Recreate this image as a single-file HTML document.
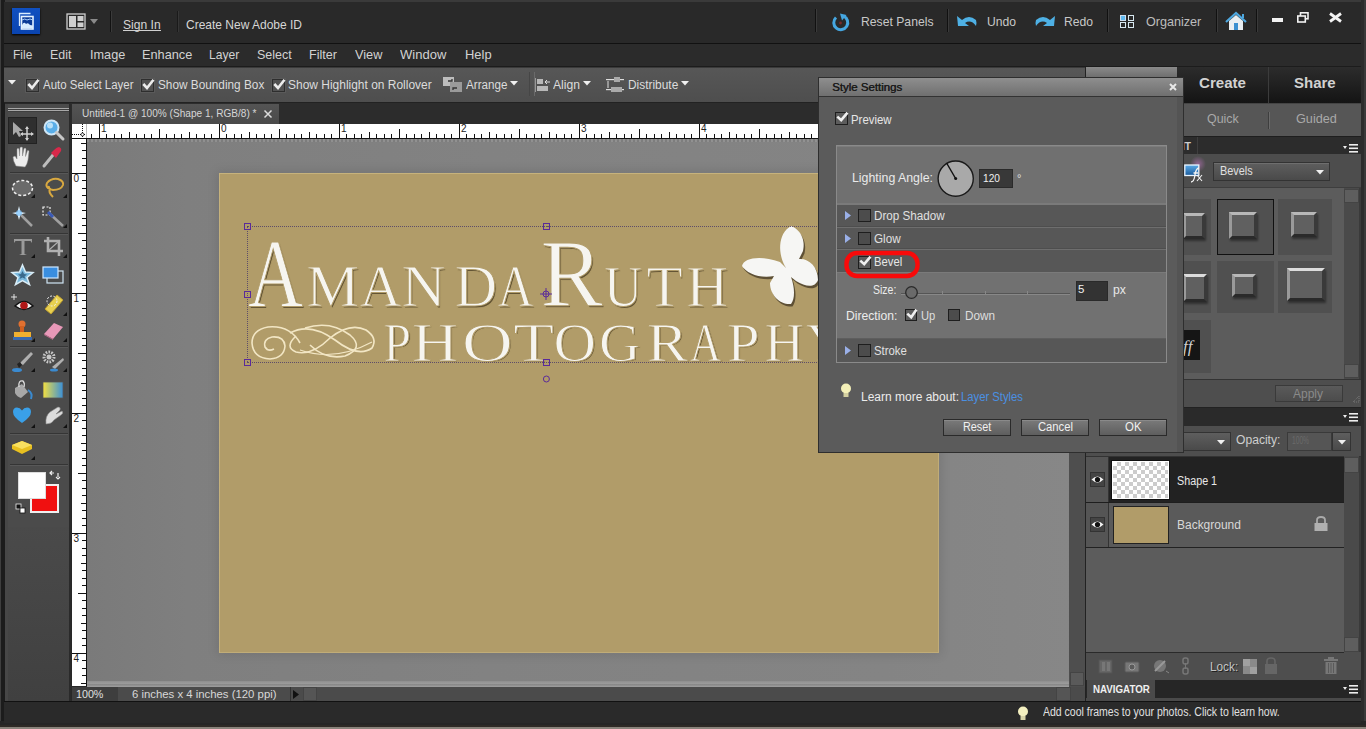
<!DOCTYPE html>
<html><head><meta charset="utf-8">
<style>
*{margin:0;padding:0;box-sizing:border-box}
html,body{width:1366px;height:729px;overflow:hidden;background:#2a2a2a;font-family:"Liberation Sans",sans-serif;}
.a{position:absolute}
.t{position:absolute;white-space:nowrap;line-height:normal}
svg{position:absolute;overflow:visible}
</style></head><body>
<div class="a" style="left:0;top:0;width:1366px;height:729px;background:#282828;overflow:hidden">
<div class="a" style="left:0px;top:0px;width:1366px;height:729px;background:#282828"></div>
<div class="a" style="left:0px;top:0px;width:1366px;height:2px;background:#3a3a3a"></div>
<div class="a" style="left:0px;top:0px;width:5px;height:729px;background:#1c1c1c"></div>
<div class="a" style="left:0px;top:0px;width:1px;height:729px;background:#3e3e3e"></div>
<div class="a" style="left:1361px;top:0px;width:5px;height:729px;background:#2c2c2c"></div>
<div class="a" style="left:1364px;top:0px;width:2px;height:729px;background:#3a3a3a"></div>
<div class="a" style="left:0px;top:721px;width:1366px;height:6px;background:#262626"></div>
<div class="a" style="left:0px;top:725px;width:1366px;height:2px;background:#2e2a26"></div>
<div class="a" style="left:0px;top:727px;width:1366px;height:2px;background:#8a847c"></div>
<div class="a" style="left:4px;top:2px;width:1357px;height:41px;background:#292929"></div>
<div class="a" style="left:4px;top:43px;width:1357px;height:1px;background:#111"></div>
<div class="a" style="left:12px;top:8px;width:28px;height:26px;background:linear-gradient(#1050c0,#0a44b0);box-shadow:0 1px 2px #000"></div>
<svg style="left:12px;top:8px;" width="28" height="26" viewBox="0 0 28 26"><path d="M7.5 18 L7.5 5.5 L18.5 5.5" fill="none" stroke="#d8ecff" stroke-width="1.3"/><rect x="9.5" y="8.5" width="11.5" height="12.5" fill="#0a3a96" stroke="#e4f2ff" stroke-width="1.6"/><path d="M10 20.5 L10 17 Q12 13 14 16 Q16 14 18 17 L21 17.5 L21 20.5 Z" fill="#d8ecff"/><path d="M10 12 Q13 10 15 12 Q18 10 21 12" fill="none" stroke="#a8d0ff" stroke-width="1"/></svg>
<svg style="left:66px;top:13px;" width="22" height="17" viewBox="0 0 22 17"><rect x="1" y="1" width="18" height="15" fill="none" stroke="#cfcfcf" stroke-width="1.3"/><rect x="3" y="3" width="7" height="11" fill="#cfcfcf"/><rect x="11.5" y="3" width="6" height="5" fill="#cfcfcf"/><rect x="11.5" y="9.5" width="6" height="4.5" fill="#cfcfcf"/></svg>
<svg style="left:90px;top:19px;" width="8" height="5" viewBox="0 0 8 5"><path d="M0 0 L8 0 L4 5 Z" fill="#8a8a8a"/></svg>
<div class="a" style="left:110px;top:11px;width:1px;height:21px;background:#121212"></div>
<div class="a" style="left:111px;top:11px;width:1px;height:21px;background:#3a3a3a"></div>
<div class="t" style="left:123.30px;top:16.54px;font-size:13px;font-weight:400;color:#d6d6d6;font-family:'Liberation Sans';transform:scaleX(0.9288);transform-origin:0 0;">Sign In</div>
<div class="a" style="left:123px;top:30px;width:38px;height:1px;background:#d0d0d0"></div>
<div class="a" style="left:177px;top:11px;width:1px;height:21px;background:#1a1a1a"></div>
<div class="a" style="left:178px;top:11px;width:1px;height:21px;background:#363636"></div>
<div class="t" style="left:186.20px;top:16.54px;font-size:13px;font-weight:400;color:#d6d6d6;font-family:'Liberation Sans';transform:scaleX(0.9226);transform-origin:0 0;">Create New Adobe ID</div>
<div class="a" style="left:815px;top:9px;width:1px;height:23px;background:#111"></div>
<div class="a" style="left:816px;top:9px;width:1px;height:23px;background:#3a3a3a"></div>
<div class="a" style="left:947px;top:9px;width:1px;height:23px;background:#111"></div>
<div class="a" style="left:948px;top:9px;width:1px;height:23px;background:#3a3a3a"></div>
<div class="a" style="left:1107px;top:9px;width:1px;height:23px;background:#111"></div>
<div class="a" style="left:1108px;top:9px;width:1px;height:23px;background:#3a3a3a"></div>
<div class="a" style="left:1216px;top:9px;width:1px;height:23px;background:#111"></div>
<div class="a" style="left:1217px;top:9px;width:1px;height:23px;background:#3a3a3a"></div>
<div class="a" style="left:1256px;top:9px;width:1px;height:23px;background:#111"></div>
<div class="a" style="left:1257px;top:9px;width:1px;height:23px;background:#3a3a3a"></div>
<svg style="left:831px;top:13px;" width="19" height="19" viewBox="0 0 19 19"><path d="M12.5 3.2 A7 7 0 1 1 5 4.5" fill="none" stroke="#45a6e0" stroke-width="3"/><path d="M9 0.5 L15.5 2 L11 7.5 Z" fill="#45a6e0"/><circle cx="9.5" cy="10" r="1.4" fill="#7a2a2a"/></svg>
<div class="t" style="left:860.50px;top:14.43px;font-size:13px;font-weight:400;color:#c8c8c8;font-family:'Liberation Sans';transform:scaleX(0.9376);transform-origin:0 0;">Reset Panels</div>
<svg style="left:956px;top:14px;" width="22" height="14" viewBox="0 0 22 14"><path d="M2 12 L1 2 L6 6 Q13 0 20 6 Q21 9 20 12 Q15 5 9 9 L13 12 Z" fill="#4eb0e4"/></svg>
<div class="t" style="left:986.80px;top:14.34px;font-size:13px;font-weight:400;color:#c8c8c8;font-family:'Liberation Sans';transform:scaleX(0.9331);transform-origin:0 0;">Undo</div>
<svg style="left:1034px;top:14px;" width="22" height="14" viewBox="0 0 22 14"><path d="M20 12 L21 2 L16 6 Q9 0 2 6 Q1 9 2 12 Q7 5 13 9 L9 12 Z" fill="#4eb0e4"/></svg>
<div class="t" style="left:1063.80px;top:14.34px;font-size:13px;font-weight:400;color:#c8c8c8;font-family:'Liberation Sans';transform:scaleX(0.9331);transform-origin:0 0;">Redo</div>
<svg style="left:1120px;top:15px;" width="15" height="13" viewBox="0 0 15 13"><rect x="0.5" y="0.5" width="5" height="5" fill="#5fb8ee" stroke="#cde" stroke-width="1"/><rect x="8.5" y="0.5" width="5" height="5" fill="none" stroke="#d8e8f0" stroke-width="1"/><rect x="0.5" y="7.5" width="5" height="5" fill="none" stroke="#d8e8f0" stroke-width="1"/><rect x="8.5" y="7.5" width="5" height="5" fill="none" stroke="#d8e8f0" stroke-width="1"/></svg>
<div class="t" style="left:1146.00px;top:13.73px;font-size:13px;font-weight:400;color:#bdbdbd;font-family:'Liberation Sans';transform:scaleX(0.9688);transform-origin:0 0;">Organizer</div>
<svg style="left:1225px;top:12px;" width="22" height="19" viewBox="0 0 22 19"><path d="M1 10 L11 1 L21 10" fill="none" stroke="#4ea8e0" stroke-width="2.2"/><path d="M4 9 L11 3 L18 9 L18 18 L4 18 Z" fill="#e8eef2"/><rect x="9" y="11" width="4" height="7" fill="#3a8fd0"/><rect x="17" y="2" width="2" height="4" fill="#4ea8e0"/></svg>
<div class="a" style="left:1272px;top:18px;width:11px;height:4px;background:#f2f2f2"></div>
<svg style="left:1297px;top:12px;" width="12" height="11" viewBox="0 0 12 11"><rect x="3.5" y="0.8" width="7.5" height="6" fill="none" stroke="#f2f2f2" stroke-width="1.6"/><rect x="0.8" y="4" width="7.5" height="6" fill="#292929" stroke="#f2f2f2" stroke-width="1.6"/></svg>
<svg style="left:1329px;top:13px;" width="13" height="9" viewBox="0 0 13 9"><path d="M1 0.5 L12 8.5 M12 0.5 L1 8.5" stroke="#f4f4f4" stroke-width="2.8"/></svg>
<div class="a" style="left:4px;top:44px;width:1357px;height:23px;background:#2b2b2b"></div>
<div class="t" style="left:13.20px;top:47.13px;font-size:13px;font-weight:400;color:#d2d2d2;font-family:'Liberation Sans';transform:scaleX(0.9211);transform-origin:0 0;">File</div>
<div class="t" style="left:50.40px;top:47.13px;font-size:13px;font-weight:400;color:#d2d2d2;font-family:'Liberation Sans';transform:scaleX(0.9551);transform-origin:0 0;">Edit</div>
<div class="t" style="left:89.60px;top:47.13px;font-size:13px;font-weight:400;color:#d2d2d2;font-family:'Liberation Sans';transform:scaleX(0.9767);transform-origin:0 0;">Image</div>
<div class="t" style="left:142.30px;top:47.13px;font-size:13px;font-weight:400;color:#d2d2d2;font-family:'Liberation Sans';transform:scaleX(0.9800);transform-origin:0 0;">Enhance</div>
<div class="t" style="left:209.00px;top:47.13px;font-size:13px;font-weight:400;color:#d2d2d2;font-family:'Liberation Sans';transform:scaleX(0.9314);transform-origin:0 0;">Layer</div>
<div class="t" style="left:256.80px;top:47.13px;font-size:13px;font-weight:400;color:#d2d2d2;font-family:'Liberation Sans';transform:scaleX(0.9629);transform-origin:0 0;">Select</div>
<div class="t" style="left:309.30px;top:47.13px;font-size:13px;font-weight:400;color:#d2d2d2;font-family:'Liberation Sans';transform:scaleX(0.9692);transform-origin:0 0;">Filter</div>
<div class="t" style="left:355.00px;top:47.13px;font-size:13px;font-weight:400;color:#d2d2d2;font-family:'Liberation Sans';transform:scaleX(0.9802);transform-origin:0 0;">View</div>
<div class="t" style="left:400.10px;top:47.13px;font-size:13px;font-weight:400;color:#d2d2d2;font-family:'Liberation Sans';transform:scaleX(1.0011);transform-origin:0 0;">Window</div>
<div class="t" style="left:465.40px;top:47.13px;font-size:13px;font-weight:400;color:#d2d2d2;font-family:'Liberation Sans';transform:scaleX(0.9944);transform-origin:0 0;">Help</div>
<div class="a" style="left:4px;top:66px;width:1357px;height:1px;background:#1c1c1c"></div>
<div class="a" style="left:4px;top:67px;width:1082px;height:35px;background:linear-gradient(#575757,#4e4e4e)"></div>
<div class="a" style="left:4px;top:67px;width:1082px;height:1px;background:#3a3a3a"></div>
<svg style="left:8px;top:80px;" width="8" height="5" viewBox="0 0 8 5"><path d="M0 0 L8 0 L4 4.5 Z" fill="#f0f0f0"/></svg>
<div class="a" style="left:26px;top:79px;width:13px;height:13px;background:#525252;border:1px solid #2e2e2e;box-shadow:0 0 0 1px #5a5a5a"></div>
<svg style="left:26px;top:79px;" width="13" height="13" viewBox="0 0 13 13"><path d="M2.3 5 L6 9 L12.5 0.8" fill="none" stroke="#ececec" stroke-width="2.6"/></svg>
<div class="t" style="left:42.50px;top:78.44px;font-size:12px;font-weight:400;color:#dcdcdc;font-family:'Liberation Sans';transform:scaleX(0.9553);transform-origin:0 0;">Auto Select Layer</div>
<div class="a" style="left:141px;top:79px;width:13px;height:13px;background:#525252;border:1px solid #2e2e2e;box-shadow:0 0 0 1px #5a5a5a"></div>
<svg style="left:141px;top:79px;" width="13" height="13" viewBox="0 0 13 13"><path d="M2.3 5 L6 9 L12.5 0.8" fill="none" stroke="#ececec" stroke-width="2.6"/></svg>
<div class="t" style="left:157.60px;top:78.44px;font-size:12px;font-weight:400;color:#dcdcdc;font-family:'Liberation Sans';transform:scaleX(0.9835);transform-origin:0 0;">Show Bounding Box</div>
<div class="a" style="left:272px;top:79px;width:13px;height:13px;background:#525252;border:1px solid #2e2e2e;box-shadow:0 0 0 1px #5a5a5a"></div>
<svg style="left:272px;top:79px;" width="13" height="13" viewBox="0 0 13 13"><path d="M2.3 5 L6 9 L12.5 0.8" fill="none" stroke="#ececec" stroke-width="2.6"/></svg>
<div class="t" style="left:288.30px;top:78.44px;font-size:12px;font-weight:400;color:#dcdcdc;font-family:'Liberation Sans';transform:scaleX(0.9974);transform-origin:0 0;">Show Highlight on Rollover</div>
<svg style="left:443px;top:77px;" width="20" height="15" viewBox="0 0 20 15"><rect x="0" y="0" width="11" height="9" fill="#bdbdbd"/><rect x="7" y="5" width="12" height="10" fill="#9a9a9a"/><path d="M5 4 L9 4 L9 2 M14 11 L10 11 L10 13" stroke="#333" stroke-width="1.3" fill="none"/></svg>
<div class="t" style="left:465.60px;top:78.14px;font-size:12px;font-weight:400;color:#dcdcdc;font-family:'Liberation Sans';transform:scaleX(0.9695);transform-origin:0 0;">Arrange</div>
<svg style="left:510px;top:81px;" width="8" height="5" viewBox="0 0 8 5"><path d="M0 0 L8 0 L4 4.5 Z" fill="#f0f0f0"/></svg>
<div class="a" style="left:529px;top:72px;width:1px;height:24px;background:#464646"></div>
<div class="a" style="left:534px;top:72px;width:1px;height:24px;background:#6a6a6a"></div>
<svg style="left:535px;top:78px;" width="16" height="14" viewBox="0 0 16 14"><rect x="0" y="0" width="1" height="14" fill="#9a9a9a"/><rect x="2" y="1" width="6" height="5" fill="#b8b8b8"/><rect x="2" y="8" width="11" height="5" fill="#b8b8b8"/><path d="M15 4 L10 4 M12 2 L10 4 L12 6" stroke="#ddd" stroke-width="1" fill="none"/></svg>
<div class="t" style="left:553.30px;top:78.14px;font-size:12px;font-weight:400;color:#dcdcdc;font-family:'Liberation Sans';transform:scaleX(1.0117);transform-origin:0 0;">Align</div>
<svg style="left:583px;top:81px;" width="8" height="5" viewBox="0 0 8 5"><path d="M0 0 L8 0 L4 4.5 Z" fill="#f0f0f0"/></svg>
<svg style="left:605px;top:77px;" width="19" height="15" viewBox="0 0 19 15"><rect x="1" y="2" width="18" height="1.2" fill="#ddd"/><rect x="1" y="12" width="18" height="1.2" fill="#ddd"/><rect x="9" y="0" width="6" height="5" fill="#aaa"/><rect x="6" y="10" width="11" height="5" fill="#aaa"/><path d="M3 4 L3 11" stroke="#ddd" stroke-width="1"/></svg>
<div class="t" style="left:627.50px;top:78.14px;font-size:12px;font-weight:400;color:#dcdcdc;font-family:'Liberation Sans';transform:scaleX(0.9924);transform-origin:0 0;">Distribute</div>
<svg style="left:681px;top:81px;" width="8" height="5" viewBox="0 0 8 5"><path d="M0 0 L8 0 L4 4.5 Z" fill="#f0f0f0"/></svg>
<div class="a" style="left:4px;top:102px;width:1082px;height:1px;background:#222"></div>
<div class="a" style="left:5px;top:104px;width:3px;height:597px;background:#474747"></div>
<div class="a" style="left:8px;top:104px;width:62px;height:424px;background:#4b4b4b"></div>
<div class="a" style="left:8px;top:527px;width:62px;height:174px;background:linear-gradient(#4a4a4a,#404040)"></div>
<div class="a" style="left:69px;top:103px;width:2px;height:598px;background:#2a2a2a"></div>
<div class="a" style="left:8px;top:108px;width:61px;height:1px;background:#a8a8a8"></div>
<div class="a" style="left:8px;top:109px;width:61px;height:1px;background:#3e3e3e"></div>
<div class="a" style="left:8px;top:110px;width:61px;height:1px;background:#a8a8a8"></div>
<div class="a" style="left:8px;top:111px;width:61px;height:1px;background:#3e3e3e"></div>
<div class="a" style="left:10px;top:172px;width:58px;height:1px;background:#353535"></div>
<div class="a" style="left:10px;top:173px;width:58px;height:1px;background:#585858"></div>
<div class="a" style="left:10px;top:233px;width:58px;height:1px;background:#353535"></div>
<div class="a" style="left:10px;top:234px;width:58px;height:1px;background:#585858"></div>
<div class="a" style="left:10px;top:346px;width:58px;height:1px;background:#353535"></div>
<div class="a" style="left:10px;top:347px;width:58px;height:1px;background:#585858"></div>
<div class="a" style="left:10px;top:433px;width:58px;height:1px;background:#353535"></div>
<div class="a" style="left:10px;top:434px;width:58px;height:1px;background:#585858"></div>
<div class="a" style="left:10px;top:464px;width:58px;height:1px;background:#353535"></div>
<div class="a" style="left:10px;top:465px;width:58px;height:1px;background:#585858"></div>
<div class="a" style="left:8px;top:117px;width:29px;height:27px;background:#2f2f2f;border:1px solid #222"></div>
<svg style="left:12px;top:121px;" width="22" height="20" viewBox="0 0 22 20"><path d="M1 1 L1 14 L4 11 L7 16 L9 15 L7 10 L11 10 Z" fill="#a8a8a8"/><path d="M15 6 L15 19 M9 13 L21 13" stroke="#cfcfcf" stroke-width="1.5"/><path d="M13 8 L15 5 L17 8 Z M13 17 L15 20 L17 17 Z M11 11 L8 13 L11 15 Z M19 11 L22 13 L19 15 Z" fill="#cfcfcf"/></svg>
<svg style="left:43px;top:119px;" width="22" height="22" viewBox="0 0 22 22"><circle cx="8.5" cy="8.5" r="7" fill="#5aaee8" stroke="#cfe6f6" stroke-width="2"/><circle cx="7" cy="6.5" r="3" fill="#b8e0f8"/><path d="M13.5 13.5 L20 20" stroke="#c8c8c8" stroke-width="3" stroke-linecap="round"/></svg>
<svg style="left:12px;top:146px;" width="20" height="22" viewBox="0 0 20 22"><path d="M4 20 Q1 15 1 11 L3 10 L5 13 L5 3 Q6 1.5 7 3 L7.5 10 L8 1.5 Q9.5 0.5 10.5 1.5 L10.5 10 L12 2.5 Q13.5 1.5 14 3 L13.5 10.5 L15.5 4.5 Q17 4 17 5.5 L16 14 Q15 19 13 21 Z" fill="#ededed" stroke="#888" stroke-width="0.5"/></svg>
<svg style="left:41px;top:146px;" width="22" height="22" viewBox="0 0 22 22"><path d="M3 20 L12 9" stroke="#bdbdbd" stroke-width="3" stroke-linecap="round"/><path d="M10 7 L15 12 L20 5 Q21 2 18 1 Q16 1 13 4 Z" fill="#d8284a"/></svg>
<svg style="left:11px;top:179px;" width="23" height="18" viewBox="0 0 23 18"><ellipse cx="11.5" cy="9" rx="10" ry="7.5" fill="#6a6a6a" stroke="#f0f0f0" stroke-width="1.5" stroke-dasharray="3 2"/></svg>
<svg style="left:31px;top:194px;" width="4" height="4" viewBox="0 0 4 4"><path d="M4 0 L4 4 L0 4 Z" fill="#111"/></svg>
<svg style="left:44px;top:178px;" width="21" height="21" viewBox="0 0 21 21"><path d="M9 19 Q4 14 6 11 Q1 9 3 5 Q7 0 14 1 Q20 3 19 7 Q17 12 9 12 Q4 11 5 8" fill="none" stroke="#d8a840" stroke-width="2"/></svg>
<svg style="left:63px;top:194px;" width="4" height="4" viewBox="0 0 4 4"><path d="M4 0 L4 4 L0 4 Z" fill="#111"/></svg>
<svg style="left:12px;top:206px;" width="22" height="22" viewBox="0 0 22 22"><path d="M9 9 L20 20" stroke="#a0a0a0" stroke-width="2.5"/><path d="M7 0 L8.5 6 L14 7 L8.5 8.5 L7 14 L5.5 8.5 L0 7 L5.5 6 Z" fill="#dff2ff"/><circle cx="7" cy="7" r="3" fill="#7cc4ff" opacity="0.7"/></svg>
<svg style="left:42px;top:206px;" width="24" height="22" viewBox="0 0 24 22"><rect x="1" y="1" width="7" height="8" fill="none" stroke="#f0f0f0" stroke-width="1.2" stroke-dasharray="2 1.5"/><path d="M7 7 L21 20" stroke="#a0a0a0" stroke-width="2.5"/><path d="M6 6 L11 11" stroke="#3a5ab8" stroke-width="3"/></svg>
<svg style="left:63px;top:224px;" width="4" height="4" viewBox="0 0 4 4"><path d="M4 0 L4 4 L0 4 Z" fill="#111"/></svg>
<svg style="left:13px;top:238px;" width="20" height="18" viewBox="0 0 20 18"><path d="M1 1 L19 1 L19 5 L17.5 3 L11.5 3 L11.5 16 L14 17 L6 17 L8.5 16 L8.5 3 L2.5 3 L1 5 Z" fill="#9a9a9a"/></svg>
<svg style="left:31px;top:254px;" width="4" height="4" viewBox="0 0 4 4"><path d="M4 0 L4 4 L0 4 Z" fill="#111"/></svg>
<svg style="left:43px;top:236px;" width="21" height="21" viewBox="0 0 21 21"><path d="M5 1 L5 15 L20 15 M1 5 L16 5 L16 20" fill="none" stroke="#b0b0b0" stroke-width="2.6"/><path d="M6 14 L15 6" stroke="#b0b0b0" stroke-width="1.2"/></svg>
<svg style="left:63px;top:254px;" width="4" height="4" viewBox="0 0 4 4"><path d="M4 0 L4 4 L0 4 Z" fill="#111"/></svg>
<svg style="left:11px;top:264px;" width="23" height="21" viewBox="0 0 23 21"><path d="M11.5 1 L14.5 8 L22 8.5 L16 13.5 L18.5 20.5 L11.5 16.5 L4.5 20.5 L7 13.5 L1 8.5 L8.5 8 Z" fill="#7ab8dc" stroke="#d8ecf6" stroke-width="1.5"/><path d="M11.5 7 L13 10 L16 10.5 L13.5 12.5 L14.5 15 L11.5 13.5 L8.5 15 L9.5 12.5 L7 10.5 L10 10 Z" fill="#3a6a8c"/></svg>
<svg style="left:42px;top:266px;" width="22" height="18" viewBox="0 0 22 18"><rect x="5" y="5" width="16" height="12" fill="none" stroke="#cfe4f4" stroke-width="1.2"/><rect x="1" y="1" width="15" height="11" fill="#3a8ee0" stroke="#d0e8ff" stroke-width="1.2"/></svg>
<svg style="left:11px;top:293px;" width="24" height="20" viewBox="0 0 24 20"><path d="M3 1 L3 7 M0 4 L6 4" stroke="#f0f0f0" stroke-width="0.9"/><path d="M4 13 Q13 4 22 13 Q13 20 4 13 Z" fill="#f4f4f4" stroke="#111" stroke-width="1.5"/><circle cx="13" cy="12.5" r="3.8" fill="#b01818"/></svg>
<svg style="left:42px;top:293px;" width="22" height="22" viewBox="0 0 22 22"><path d="M3 16 L15 2 L21 7 L9 21 Z" fill="#e8d050" stroke="#c0a030" stroke-width="1"/><circle cx="10" cy="8" r="5" fill="none" stroke="#f0f0f0" stroke-width="1" stroke-dasharray="2 1.5"/></svg>
<svg style="left:63px;top:312px;" width="4" height="4" viewBox="0 0 4 4"><path d="M4 0 L4 4 L0 4 Z" fill="#111"/></svg>
<svg style="left:12px;top:320px;" width="22" height="22" viewBox="0 0 22 22"><circle cx="10" cy="4" r="3.5" fill="#e07030"/><rect x="8" y="6" width="4" height="7" fill="#d06020"/><rect x="2" y="12" width="17" height="5" fill="#f0b030"/><rect x="1" y="17" width="19" height="3" fill="#3a6ab0"/></svg>
<svg style="left:31px;top:338px;" width="4" height="4" viewBox="0 0 4 4"><path d="M4 0 L4 4 L0 4 Z" fill="#111"/></svg>
<svg style="left:43px;top:322px;" width="21" height="18" viewBox="0 0 21 18"><path d="M1 12 L11 1 L20 5 L10 17 Z" fill="#e898b8"/><path d="M1 12 L10 17 L10 18 L1 13 Z" fill="#b86888"/></svg>
<svg style="left:63px;top:338px;" width="4" height="4" viewBox="0 0 4 4"><path d="M4 0 L4 4 L0 4 Z" fill="#111"/></svg>
<svg style="left:11px;top:350px;" width="23" height="23" viewBox="0 0 23 23"><path d="M9 13 L20 2 L22 4 L12 15 Z" fill="#b0b0b0"/><path d="M6 14 L9 12 L11 15 L8 18 Z" fill="#222"/><ellipse cx="6" cy="20" rx="5" ry="2" fill="#3a8ad0"/></svg>
<svg style="left:31px;top:368px;" width="4" height="4" viewBox="0 0 4 4"><path d="M4 0 L4 4 L0 4 Z" fill="#111"/></svg>
<svg style="left:41px;top:350px;" width="24" height="23" viewBox="0 0 24 23"><circle cx="8" cy="7" r="5" fill="none" stroke="#c8c8c8" stroke-width="3" stroke-dasharray="1.6 1.2"/><circle cx="8" cy="7" r="2.5" fill="#c8c8c8"/><path d="M11 17 L22 8 L23 10 L14 19 Z" fill="#b0b0b0"/><ellipse cx="13" cy="20" rx="4" ry="1.5" fill="#3a8ad0"/></svg>
<svg style="left:63px;top:368px;" width="4" height="4" viewBox="0 0 4 4"><path d="M4 0 L4 4 L0 4 Z" fill="#111"/></svg>
<svg style="left:12px;top:379px;" width="22" height="22" viewBox="0 0 22 22"><path d="M3 9 L10 5 L16 13 L9 19 Q5 18 3 14 Z" fill="#a8a8a8"/><path d="M7 8 Q6 1 11 2 Q13 4 12 8" fill="none" stroke="#ddd" stroke-width="1.3"/><path d="M16 11 Q21 14 19 20" stroke="#3a8ad0" stroke-width="2" fill="none"/></svg>
<svg style="left:43px;top:382px;" width="20" height="16" viewBox="0 0 20 16"><defs><linearGradient id="gg" x1="0" x2="1"><stop offset="0" stop-color="#f4e040"/><stop offset="1" stop-color="#3a90d8"/></linearGradient></defs><rect x="0" y="0" width="20" height="16" fill="url(#gg)" stroke="#555" stroke-width="0.8"/></svg>
<svg style="left:12px;top:407px;" width="20" height="17" viewBox="0 0 20 17"><path d="M10 16 Q1 10 1 5 Q1 0.5 5 0.5 Q8 0.5 10 3.5 Q12 0.5 15 0.5 Q19 0.5 19 5 Q19 10 10 16 Z" fill="#3aa0e8"/></svg>
<svg style="left:31px;top:424px;" width="4" height="4" viewBox="0 0 4 4"><path d="M4 0 L4 4 L0 4 Z" fill="#111"/></svg>
<svg style="left:44px;top:406px;" width="20" height="20" viewBox="0 0 20 20"><path d="M2 18 Q1 10 6 6 L14 1 Q17 1 16 4 L12 8 L18 5 Q20 7 17 9 L10 14 Q8 18 2 18 Z" fill="#dcdcdc" stroke="#888" stroke-width="0.6"/></svg>
<svg style="left:63px;top:424px;" width="4" height="4" viewBox="0 0 4 4"><path d="M4 0 L4 4 L0 4 Z" fill="#111"/></svg>
<svg style="left:11px;top:440px;" width="22" height="15" viewBox="0 0 22 15"><path d="M1 5 L11 1 L21 5 L21 9 L11 14 L1 9 Z" fill="#e8c020"/><path d="M1 5 L11 9 L21 5 L11 1 Z" fill="#f8e060"/></svg>
<svg style="left:31px;top:456px;" width="4" height="4" viewBox="0 0 4 4"><path d="M4 0 L4 4 L0 4 Z" fill="#111"/></svg>
<div class="a" style="left:30px;top:484px;width:29px;height:29px;background:#f01010;border:2px solid #f0f0f0"></div>
<div class="a" style="left:18px;top:472px;width:28px;height:27px;background:#fff;border:1px solid #ddd"></div>
<svg style="left:49px;top:470px;" width="10" height="10" viewBox="0 0 10 10"><path d="M1 3 L5 3 M3 1 L1 3 L3 5 M9 7 L9 3 M7 7 L9 9 L11 7" fill="none" stroke="#eee" stroke-width="1.2"/></svg>
<svg style="left:16px;top:504px;" width="10" height="10" viewBox="0 0 10 10"><rect x="0" y="0" width="5" height="5" fill="#111" stroke="#eee" stroke-width="0.8"/><rect x="4" y="4" width="5" height="5" fill="#fff" stroke="#111" stroke-width="0.8"/></svg>
<div class="a" style="left:71px;top:103px;width:1015px;height:21px;background:#2c2c2c"></div>
<div class="a" style="left:72px;top:104px;width:207px;height:20px;background:linear-gradient(#545454,#4a4a4a)"></div>
<div class="t" style="left:81.50px;top:107.05px;font-size:11px;font-weight:400;color:#d6d6d6;font-family:'Liberation Sans';transform:scaleX(0.9168);transform-origin:0 0;">Untitled-1 @ 100% (Shape 1, RGB/8) *</div>
<svg style="left:264px;top:110px;" width="8" height="8" viewBox="0 0 8 8"><path d="M0.5 0.5 L7.5 7.5 M7.5 0.5 L0.5 7.5" stroke="#dcdcdc" stroke-width="1.5"/></svg>
<div class="a" style="left:72px;top:124px;width:1000px;height:14px;background:#fff"></div>
<div class="a" style="left:72px;top:138px;width:1000px;height:1px;background:#111"></div>
<div class="a" style="left:72px;top:139px;width:14px;height:547px;background:#fff"></div>
<div class="a" style="left:86px;top:139px;width:1px;height:547px;background:#111"></div>
<svg style="left:72px;top:124px;" width="1000" height="14" viewBox="0 0 1000 14"><rect x="19" y="10" width="1" height="4" fill="#111"/><rect x="27" y="0" width="1" height="14" fill="#111"/><rect x="34" y="10" width="1" height="4" fill="#111"/><rect x="42" y="10" width="1" height="4" fill="#111"/><rect x="49" y="10" width="1" height="4" fill="#111"/><rect x="57" y="8" width="1" height="6" fill="#111"/><rect x="64" y="10" width="1" height="4" fill="#111"/><rect x="72" y="10" width="1" height="4" fill="#111"/><rect x="79" y="10" width="1" height="4" fill="#111"/><rect x="87" y="5" width="1" height="9" fill="#111"/><rect x="94" y="10" width="1" height="4" fill="#111"/><rect x="102" y="10" width="1" height="4" fill="#111"/><rect x="109" y="10" width="1" height="4" fill="#111"/><rect x="117" y="8" width="1" height="6" fill="#111"/><rect x="124" y="10" width="1" height="4" fill="#111"/><rect x="132" y="10" width="1" height="4" fill="#111"/><rect x="139" y="10" width="1" height="4" fill="#111"/><rect x="147" y="0" width="1" height="14" fill="#111"/><rect x="154" y="10" width="1" height="4" fill="#111"/><rect x="162" y="10" width="1" height="4" fill="#111"/><rect x="169" y="10" width="1" height="4" fill="#111"/><rect x="177" y="8" width="1" height="6" fill="#111"/><rect x="184" y="10" width="1" height="4" fill="#111"/><rect x="192" y="10" width="1" height="4" fill="#111"/><rect x="199" y="10" width="1" height="4" fill="#111"/><rect x="207" y="5" width="1" height="9" fill="#111"/><rect x="214" y="10" width="1" height="4" fill="#111"/><rect x="222" y="10" width="1" height="4" fill="#111"/><rect x="229" y="10" width="1" height="4" fill="#111"/><rect x="237" y="8" width="1" height="6" fill="#111"/><rect x="244" y="10" width="1" height="4" fill="#111"/><rect x="252" y="10" width="1" height="4" fill="#111"/><rect x="259" y="10" width="1" height="4" fill="#111"/><rect x="267" y="0" width="1" height="14" fill="#111"/><rect x="274" y="10" width="1" height="4" fill="#111"/><rect x="282" y="10" width="1" height="4" fill="#111"/><rect x="289" y="10" width="1" height="4" fill="#111"/><rect x="297" y="8" width="1" height="6" fill="#111"/><rect x="304" y="10" width="1" height="4" fill="#111"/><rect x="312" y="10" width="1" height="4" fill="#111"/><rect x="319" y="10" width="1" height="4" fill="#111"/><rect x="327" y="5" width="1" height="9" fill="#111"/><rect x="334" y="10" width="1" height="4" fill="#111"/><rect x="342" y="10" width="1" height="4" fill="#111"/><rect x="349" y="10" width="1" height="4" fill="#111"/><rect x="357" y="8" width="1" height="6" fill="#111"/><rect x="364" y="10" width="1" height="4" fill="#111"/><rect x="372" y="10" width="1" height="4" fill="#111"/><rect x="379" y="10" width="1" height="4" fill="#111"/><rect x="387" y="0" width="1" height="14" fill="#111"/><rect x="394" y="10" width="1" height="4" fill="#111"/><rect x="402" y="10" width="1" height="4" fill="#111"/><rect x="409" y="10" width="1" height="4" fill="#111"/><rect x="417" y="8" width="1" height="6" fill="#111"/><rect x="424" y="10" width="1" height="4" fill="#111"/><rect x="432" y="10" width="1" height="4" fill="#111"/><rect x="439" y="10" width="1" height="4" fill="#111"/><rect x="447" y="5" width="1" height="9" fill="#111"/><rect x="454" y="10" width="1" height="4" fill="#111"/><rect x="462" y="10" width="1" height="4" fill="#111"/><rect x="469" y="10" width="1" height="4" fill="#111"/><rect x="477" y="8" width="1" height="6" fill="#111"/><rect x="484" y="10" width="1" height="4" fill="#111"/><rect x="492" y="10" width="1" height="4" fill="#111"/><rect x="499" y="10" width="1" height="4" fill="#111"/><rect x="507" y="0" width="1" height="14" fill="#111"/><rect x="514" y="10" width="1" height="4" fill="#111"/><rect x="522" y="10" width="1" height="4" fill="#111"/><rect x="529" y="10" width="1" height="4" fill="#111"/><rect x="537" y="8" width="1" height="6" fill="#111"/><rect x="544" y="10" width="1" height="4" fill="#111"/><rect x="552" y="10" width="1" height="4" fill="#111"/><rect x="559" y="10" width="1" height="4" fill="#111"/><rect x="567" y="5" width="1" height="9" fill="#111"/><rect x="574" y="10" width="1" height="4" fill="#111"/><rect x="582" y="10" width="1" height="4" fill="#111"/><rect x="589" y="10" width="1" height="4" fill="#111"/><rect x="597" y="8" width="1" height="6" fill="#111"/><rect x="604" y="10" width="1" height="4" fill="#111"/><rect x="612" y="10" width="1" height="4" fill="#111"/><rect x="619" y="10" width="1" height="4" fill="#111"/><rect x="627" y="0" width="1" height="14" fill="#111"/><rect x="634" y="10" width="1" height="4" fill="#111"/><rect x="642" y="10" width="1" height="4" fill="#111"/><rect x="649" y="10" width="1" height="4" fill="#111"/><rect x="657" y="8" width="1" height="6" fill="#111"/><rect x="664" y="10" width="1" height="4" fill="#111"/><rect x="672" y="10" width="1" height="4" fill="#111"/><rect x="679" y="10" width="1" height="4" fill="#111"/><rect x="687" y="5" width="1" height="9" fill="#111"/><rect x="694" y="10" width="1" height="4" fill="#111"/><rect x="702" y="10" width="1" height="4" fill="#111"/><rect x="709" y="10" width="1" height="4" fill="#111"/><rect x="717" y="8" width="1" height="6" fill="#111"/><rect x="724" y="10" width="1" height="4" fill="#111"/><rect x="732" y="10" width="1" height="4" fill="#111"/><rect x="739" y="10" width="1" height="4" fill="#111"/><rect x="747" y="0" width="1" height="14" fill="#111"/><rect x="754" y="10" width="1" height="4" fill="#111"/><rect x="762" y="10" width="1" height="4" fill="#111"/><rect x="769" y="10" width="1" height="4" fill="#111"/><rect x="777" y="8" width="1" height="6" fill="#111"/><rect x="784" y="10" width="1" height="4" fill="#111"/><rect x="792" y="10" width="1" height="4" fill="#111"/><rect x="799" y="10" width="1" height="4" fill="#111"/><rect x="807" y="5" width="1" height="9" fill="#111"/><rect x="814" y="10" width="1" height="4" fill="#111"/><rect x="822" y="10" width="1" height="4" fill="#111"/><rect x="829" y="10" width="1" height="4" fill="#111"/><rect x="837" y="8" width="1" height="6" fill="#111"/><rect x="844" y="10" width="1" height="4" fill="#111"/><rect x="852" y="10" width="1" height="4" fill="#111"/><rect x="859" y="10" width="1" height="4" fill="#111"/><rect x="867" y="0" width="1" height="14" fill="#111"/><rect x="874" y="10" width="1" height="4" fill="#111"/><rect x="882" y="10" width="1" height="4" fill="#111"/><rect x="889" y="10" width="1" height="4" fill="#111"/><rect x="897" y="8" width="1" height="6" fill="#111"/><rect x="904" y="10" width="1" height="4" fill="#111"/><rect x="912" y="10" width="1" height="4" fill="#111"/><rect x="919" y="10" width="1" height="4" fill="#111"/><rect x="927" y="5" width="1" height="9" fill="#111"/><rect x="934" y="10" width="1" height="4" fill="#111"/><rect x="942" y="10" width="1" height="4" fill="#111"/><rect x="949" y="10" width="1" height="4" fill="#111"/><rect x="957" y="8" width="1" height="6" fill="#111"/><rect x="964" y="10" width="1" height="4" fill="#111"/><rect x="972" y="10" width="1" height="4" fill="#111"/><rect x="979" y="10" width="1" height="4" fill="#111"/><rect x="987" y="0" width="1" height="14" fill="#111"/><rect x="994" y="10" width="1" height="4" fill="#111"/></svg>
<div class="t" style="left:101.00px;top:122.95px;font-size:10px;font-weight:400;color:#222;font-family:'Liberation Sans';">1</div>
<div class="t" style="left:221.00px;top:122.95px;font-size:10px;font-weight:400;color:#222;font-family:'Liberation Sans';">0</div>
<div class="t" style="left:341.00px;top:122.95px;font-size:10px;font-weight:400;color:#222;font-family:'Liberation Sans';">1</div>
<div class="t" style="left:461.00px;top:122.95px;font-size:10px;font-weight:400;color:#222;font-family:'Liberation Sans';">2</div>
<div class="t" style="left:581.00px;top:122.95px;font-size:10px;font-weight:400;color:#222;font-family:'Liberation Sans';">3</div>
<div class="t" style="left:701.00px;top:122.95px;font-size:10px;font-weight:400;color:#222;font-family:'Liberation Sans';">4</div>
<div class="t" style="left:821.00px;top:122.95px;font-size:10px;font-weight:400;color:#222;font-family:'Liberation Sans';">5</div>
<div class="t" style="left:941.00px;top:122.95px;font-size:10px;font-weight:400;color:#222;font-family:'Liberation Sans';">6</div>
<div class="t" style="left:1061.00px;top:122.95px;font-size:10px;font-weight:400;color:#222;font-family:'Liberation Sans';">7</div>
<svg style="left:72px;top:124px;" width="14" height="562" viewBox="0 0 14 562"><rect x="9" y="19" width="5" height="1" fill="#111"/><rect x="10" y="26" width="4" height="1" fill="#111"/><rect x="10" y="34" width="4" height="1" fill="#111"/><rect x="10" y="41" width="4" height="1" fill="#111"/><rect x="0" y="49" width="14" height="1" fill="#111"/><rect x="10" y="56" width="4" height="1" fill="#111"/><rect x="10" y="64" width="4" height="1" fill="#111"/><rect x="10" y="71" width="4" height="1" fill="#111"/><rect x="9" y="79" width="5" height="1" fill="#111"/><rect x="10" y="86" width="4" height="1" fill="#111"/><rect x="10" y="94" width="4" height="1" fill="#111"/><rect x="10" y="101" width="4" height="1" fill="#111"/><rect x="6" y="109" width="8" height="1" fill="#111"/><rect x="10" y="116" width="4" height="1" fill="#111"/><rect x="10" y="124" width="4" height="1" fill="#111"/><rect x="10" y="131" width="4" height="1" fill="#111"/><rect x="9" y="139" width="5" height="1" fill="#111"/><rect x="10" y="146" width="4" height="1" fill="#111"/><rect x="10" y="154" width="4" height="1" fill="#111"/><rect x="10" y="161" width="4" height="1" fill="#111"/><rect x="0" y="169" width="14" height="1" fill="#111"/><rect x="10" y="176" width="4" height="1" fill="#111"/><rect x="10" y="184" width="4" height="1" fill="#111"/><rect x="10" y="191" width="4" height="1" fill="#111"/><rect x="9" y="199" width="5" height="1" fill="#111"/><rect x="10" y="206" width="4" height="1" fill="#111"/><rect x="10" y="214" width="4" height="1" fill="#111"/><rect x="10" y="221" width="4" height="1" fill="#111"/><rect x="6" y="229" width="8" height="1" fill="#111"/><rect x="10" y="236" width="4" height="1" fill="#111"/><rect x="10" y="244" width="4" height="1" fill="#111"/><rect x="10" y="251" width="4" height="1" fill="#111"/><rect x="9" y="259" width="5" height="1" fill="#111"/><rect x="10" y="266" width="4" height="1" fill="#111"/><rect x="10" y="274" width="4" height="1" fill="#111"/><rect x="10" y="281" width="4" height="1" fill="#111"/><rect x="0" y="289" width="14" height="1" fill="#111"/><rect x="10" y="296" width="4" height="1" fill="#111"/><rect x="10" y="304" width="4" height="1" fill="#111"/><rect x="10" y="311" width="4" height="1" fill="#111"/><rect x="9" y="319" width="5" height="1" fill="#111"/><rect x="10" y="326" width="4" height="1" fill="#111"/><rect x="10" y="334" width="4" height="1" fill="#111"/><rect x="10" y="341" width="4" height="1" fill="#111"/><rect x="6" y="349" width="8" height="1" fill="#111"/><rect x="10" y="356" width="4" height="1" fill="#111"/><rect x="10" y="364" width="4" height="1" fill="#111"/><rect x="10" y="371" width="4" height="1" fill="#111"/><rect x="9" y="379" width="5" height="1" fill="#111"/><rect x="10" y="386" width="4" height="1" fill="#111"/><rect x="10" y="394" width="4" height="1" fill="#111"/><rect x="10" y="401" width="4" height="1" fill="#111"/><rect x="0" y="409" width="14" height="1" fill="#111"/><rect x="10" y="416" width="4" height="1" fill="#111"/><rect x="10" y="424" width="4" height="1" fill="#111"/><rect x="10" y="431" width="4" height="1" fill="#111"/><rect x="9" y="439" width="5" height="1" fill="#111"/><rect x="10" y="446" width="4" height="1" fill="#111"/><rect x="10" y="454" width="4" height="1" fill="#111"/><rect x="10" y="461" width="4" height="1" fill="#111"/><rect x="6" y="469" width="8" height="1" fill="#111"/><rect x="10" y="476" width="4" height="1" fill="#111"/><rect x="10" y="484" width="4" height="1" fill="#111"/><rect x="10" y="491" width="4" height="1" fill="#111"/><rect x="9" y="499" width="5" height="1" fill="#111"/><rect x="10" y="506" width="4" height="1" fill="#111"/><rect x="10" y="514" width="4" height="1" fill="#111"/><rect x="10" y="521" width="4" height="1" fill="#111"/><rect x="0" y="529" width="14" height="1" fill="#111"/><rect x="10" y="536" width="4" height="1" fill="#111"/><rect x="10" y="544" width="4" height="1" fill="#111"/><rect x="10" y="551" width="4" height="1" fill="#111"/><rect x="9" y="559" width="5" height="1" fill="#111"/></svg>
<div class="t" style="left:73.50px;top:172.95px;font-size:10px;font-weight:400;color:#222;font-family:'Liberation Sans';">0</div>
<div class="t" style="left:73.50px;top:292.95px;font-size:10px;font-weight:400;color:#222;font-family:'Liberation Sans';">1</div>
<div class="t" style="left:73.50px;top:412.95px;font-size:10px;font-weight:400;color:#222;font-family:'Liberation Sans';">2</div>
<div class="t" style="left:73.50px;top:532.95px;font-size:10px;font-weight:400;color:#222;font-family:'Liberation Sans';">3</div>
<div class="t" style="left:73.50px;top:652.95px;font-size:10px;font-weight:400;color:#222;font-family:'Liberation Sans';">4</div>
<svg style="left:72px;top:124px;" width="15" height="15" viewBox="0 0 15 15"><path d="M10.5 0 L10.5 14 M0 10.5 L14 10.5" stroke="#111" stroke-width="1" stroke-dasharray="1 1"/><circle cx="10.5" cy="10.5" r="1.5" fill="#fff" stroke="#111" stroke-width="0.8"/></svg>
<div class="a" style="left:86px;top:124px;width:1px;height:14px;background:#bbb"></div>
<div class="a" style="left:87px;top:139px;width:985px;height:547px;background:linear-gradient(90deg,#7a7a7a 0px,#7f7f7f 100px,#828282 400px,#848484 800px,#878787 985px)"></div>
<div class="a" style="left:87px;top:139px;width:985px;height:3px;background:repeating-linear-gradient(90deg,#9a9a9a 0 2px,#7a7a7a 2px 4px);opacity:.6"></div>
<div class="a" style="left:87px;top:681px;width:985px;height:6px;background:linear-gradient(#8e8e8e,#9c9c9c 40%,#888 60%,#a0a0a0)"></div>
<div class="a" style="left:219px;top:173px;width:720px;height:480px;background:#b19c69;box-shadow:inset 1px 1px 0 #c6b27c,inset -1px -1px 0 #c0ac78,0 0 10px 2px rgba(0,0,0,.10)"></div>
<div class="a" style="left:1069px;top:124px;width:17px;height:563px;background:#4e4e4e"></div>
<div class="a" style="left:1070px;top:672px;width:14px;height:14px;background:#5a5a5a;border:1px solid #444"></div>
<div class="a" style="left:72px;top:687px;width:1014px;height:14px;background:#4b4b4b"></div>
<div class="a" style="left:72px;top:687px;width:46px;height:14px;background:#3e3e3e"></div>
<div class="t" style="left:76.00px;top:688.04px;font-size:11px;font-weight:400;color:#e0e0e0;font-family:'Liberation Sans';transform:scaleX(0.9737);transform-origin:0 0;">100%</div>
<div class="t" style="left:132.00px;top:688.04px;font-size:11px;font-weight:400;color:#d8d8d8;font-family:'Liberation Sans';transform:scaleX(1.0319);transform-origin:0 0;">6 inches x 4 inches (120 ppi)</div>
<div class="a" style="left:290px;top:687px;width:1px;height:14px;background:#333"></div>
<svg style="left:293px;top:690px;" width="7" height="9" viewBox="0 0 7 9"><path d="M0 0 L6 4.5 L0 9 Z" fill="#111"/></svg>
<div class="a" style="left:303px;top:687px;width:14px;height:14px;background:#555;border:1px solid #444"></div>
<div class="a" style="left:1056px;top:687px;width:15px;height:14px;background:#555;border:1px solid #444"></div>
<div class="a" style="left:1085px;top:67px;width:276px;height:634px;background:#3a3a3a"></div>
<div class="a" style="left:1085px;top:67px;width:1px;height:634px;background:#222"></div>
<div class="a" style="left:1086px;top:67px;width:91px;height:11px;background:linear-gradient(#8a8a8a,#6c6c6c)"></div>
<div class="a" style="left:1177px;top:67px;width:184px;height:36px;background:linear-gradient(#2c2c2c,#141414)"></div>
<div class="a" style="left:1268px;top:67px;width:1px;height:36px;background:#3c3c3c"></div>
<div class="t" style="left:1199.20px;top:75.13px;font-size:14px;font-weight:700;color:#d2d2d2;font-family:'Liberation Sans';transform:scaleX(1.0781);transform-origin:0 0;">Create</div>
<div class="t" style="left:1294.20px;top:75.13px;font-size:14px;font-weight:700;color:#d2d2d2;font-family:'Liberation Sans';transform:scaleX(1.0714);transform-origin:0 0;">Share</div>
<div class="a" style="left:1086px;top:103px;width:275px;height:33px;background:#565656"></div>
<div class="a" style="left:1086px;top:103px;width:275px;height:1px;background:#444"></div>
<div class="a" style="left:1268px;top:112px;width:1px;height:17px;background:#3e3e3e"></div>
<div class="a" style="left:1269px;top:112px;width:1px;height:17px;background:#6a6a6a"></div>
<div class="t" style="left:1207.30px;top:111.99px;font-size:12.5px;font-weight:400;color:#a9a9a9;font-family:'Liberation Sans';transform:scaleX(0.9952);transform-origin:0 0;">Quick</div>
<div class="t" style="left:1295.50px;top:111.99px;font-size:12.5px;font-weight:400;color:#a9a9a9;font-family:'Liberation Sans';transform:scaleX(1.0146);transform-origin:0 0;">Guided</div>
<div class="a" style="left:1086px;top:136px;width:275px;height:1px;background:#1e1e1e"></div>
<div class="a" style="left:1086px;top:137px;width:275px;height:17px;background:#2c2c2c"></div>
<div class="t" style="left:1182.00px;top:140.04px;font-size:11px;font-weight:700;color:#cfcfcf;font-family:'Liberation Sans';transform:scaleX(0.9201);transform-origin:0 0;">IT</div>
<div class="a" style="left:1197px;top:137px;width:1px;height:17px;background:#3e3e3e"></div>
<svg style="left:1343px;top:144px;" width="15" height="10" viewBox="0 0 15 10"><path d="M0 2 L4 2 L2 5 Z" fill="#eee"/><rect x="6" y="0" width="9" height="1.6" fill="#eee"/><rect x="6" y="3.5" width="9" height="1.6" fill="#eee"/><rect x="6" y="7" width="9" height="1.6" fill="#eee"/></svg>
<div class="a" style="left:1086px;top:154px;width:275px;height:34px;background:#4d4d4d"></div>
<svg style="left:1184px;top:158px;" width="24" height="26" viewBox="0 0 24 26"><defs><radialGradient id="pg"><stop offset="0" stop-color="#b070b0" stop-opacity=".7"/><stop offset="1" stop-color="#b070b0" stop-opacity="0"/></radialGradient><linearGradient id="bg2" x1="0" y1="0" x2="0" y2="1"><stop offset="0" stop-color="#5aaae8"/><stop offset="1" stop-color="#1a5a9a"/></linearGradient></defs><circle cx="14" cy="6" r="8" fill="url(#pg)"/><rect x="0.8" y="7" width="14" height="10.5" fill="url(#bg2)" stroke="#e8f4ff" stroke-width="1.3"/><path d="M7 24 Q10 24 11 17 Q12 10 15 10 M9.5 15 L14 15" stroke="#f4f4f4" stroke-width="1.3" fill="none"/><path d="M13 17 L18 23 M18 17 L13 23" stroke="#f4f4f4" stroke-width="1.1"/></svg>
<div class="a" style="left:1213px;top:162px;width:117px;height:19px;background:linear-gradient(#5e5e5e,#4a4a4a);border:1px solid #333;box-shadow:inset 0 1px 0 #6e6e6e"></div>
<div class="t" style="left:1220.30px;top:163.94px;font-size:12px;font-weight:400;color:#e0e0e0;font-family:'Liberation Sans';transform:scaleX(0.9048);transform-origin:0 0;">Bevels</div>
<svg style="left:1316px;top:170px;" width="8" height="5" viewBox="0 0 8 5"><path d="M0 0 L8 0 L4 4.5 Z" fill="#f0f0f0"/></svg>
<div class="a" style="left:1086px;top:187px;width:275px;height:1px;background:#3e3e3e"></div>
<div class="a" style="left:1086px;top:188px;width:258px;height:191px;background:#5c5c5c"></div>
<div class="a" style="left:1183px;top:199px;width:28px;height:56px;background:#505050"></div>
<div class="a" style="left:1183px;top:213px;width:22px;height:26px;background:#606060;border-top:3px solid #b8b8b8;border-left:3px solid #9a9a9a;border-right:3px solid #3a3a3a;border-bottom:3px solid #2a2a2a;box-shadow:1px 2px 2px rgba(0,0,0,.4)"></div>
<div class="a" style="left:1217px;top:199px;width:57px;height:56px;background:#505050;border:1px solid #111"></div>
<div class="a" style="left:1229px;top:212px;width:28px;height:27px;background:#606060;border-top:3px solid #b8b8b8;border-left:3px solid #9a9a9a;border-right:3px solid #3a3a3a;border-bottom:3px solid #2a2a2a;box-shadow:1px 2px 2px rgba(0,0,0,.4)"></div>
<div class="a" style="left:1278px;top:199px;width:54px;height:56px;background:#505050"></div>
<div class="a" style="left:1291px;top:212px;width:26px;height:25px;background:#606060;border-top:3px solid #b8b8b8;border-left:3px solid #9a9a9a;border-right:3px solid #3a3a3a;border-bottom:3px solid #2a2a2a;box-shadow:1px 2px 2px rgba(0,0,0,.4)"></div>
<div class="a" style="left:1183px;top:261px;width:28px;height:52px;background:#505050"></div>
<div class="a" style="left:1183px;top:274px;width:24px;height:28px;background:#606060;border-top:3px solid #dcdcdc;border-left:3px solid #9a9a9a;border-right:3px solid #3a3a3a;border-bottom:3px solid #2a2a2a;box-shadow:1px 2px 2px rgba(0,0,0,.4)"></div>
<div class="a" style="left:1217px;top:261px;width:57px;height:52px;background:#505050"></div>
<div class="a" style="left:1232px;top:274px;width:24px;height:23px;background:#606060;border-top:3px solid #b8b8b8;border-left:3px solid #9a9a9a;border-right:3px solid #3a3a3a;border-bottom:3px solid #2a2a2a;box-shadow:1px 2px 2px rgba(0,0,0,.4)"></div>
<div class="a" style="left:1278px;top:261px;width:54px;height:52px;background:#505050"></div>
<div class="a" style="left:1287px;top:268px;width:38px;height:33px;background:#606060;border-top:3px solid #dcdcdc;border-left:3px solid #9a9a9a;border-right:3px solid #3a3a3a;border-bottom:3px solid #2a2a2a;box-shadow:1px 2px 2px rgba(0,0,0,.4)"></div>
<div class="a" style="left:1183px;top:320px;width:28px;height:53px;background:#505050"></div>
<div class="a" style="left:1183px;top:330px;width:17px;height:30px;background:#151515"></div>
<div class="t" style="left:1183.00px;top:336.62px;font-size:17px;font-weight:400;color:#cfcfcf;font-family:'Liberation Serif';font-style:italic">ff</div>
<div class="a" style="left:1344px;top:188px;width:15px;height:191px;background:#4a4a4a"></div>
<div class="a" style="left:1344px;top:189px;width:15px;height:14px;background:#5e5e5e;border:1px solid #444"></div>
<div class="a" style="left:1344px;top:364px;width:15px;height:14px;background:#5e5e5e;border:1px solid #444"></div>
<div class="a" style="left:1086px;top:379px;width:275px;height:29px;background:#4e4e4e"></div>
<div class="a" style="left:1086px;top:379px;width:275px;height:1px;background:#333"></div>
<div class="a" style="left:1275px;top:385px;width:68px;height:17px;background:linear-gradient(#5a5a5a,#4c4c4c);border:1px solid #3a3a3a"></div>
<div class="t" style="left:1293.00px;top:387.14px;font-size:12px;font-weight:400;color:#8a8a8a;font-family:'Liberation Sans';transform:scaleX(0.9990);transform-origin:0 0;">Apply</div>
<svg style="left:1352px;top:395px;" width="8" height="8" viewBox="0 0 8 8"><path d="M7 1 L7 7 L1 7 Z" fill="none" stroke="#777" stroke-width="1" stroke-dasharray="1 1"/></svg>
<div class="a" style="left:1086px;top:408px;width:275px;height:18px;background:#2a2a2a"></div>
<div class="a" style="left:1086px;top:407px;width:275px;height:1px;background:#222"></div>
<svg style="left:1343px;top:413px;" width="15" height="10" viewBox="0 0 15 10"><path d="M0 2 L4 2 L2 5 Z" fill="#eee"/><rect x="6" y="0" width="9" height="1.6" fill="#eee"/><rect x="6" y="3.5" width="9" height="1.6" fill="#eee"/><rect x="6" y="7" width="9" height="1.6" fill="#eee"/></svg>
<div class="a" style="left:1086px;top:426px;width:275px;height:30px;background:#4e4e4e"></div>
<div class="a" style="left:1150px;top:432px;width:81px;height:19px;background:linear-gradient(#5e5e5e,#4a4a4a);border:1px solid #333"></div>
<svg style="left:1217px;top:440px;" width="8" height="5" viewBox="0 0 8 5"><path d="M0 0 L8 0 L4 4.5 Z" fill="#f0f0f0"/></svg>
<div class="t" style="left:1235.80px;top:432.69px;font-size:12.5px;font-weight:400;color:#cfcfcf;font-family:'Liberation Sans';transform:scaleX(0.9682);transform-origin:0 0;">Opacity:</div>
<div class="a" style="left:1287px;top:432px;width:45px;height:19px;background:#555;border:1px solid #3a3a3a"></div>
<div class="t" style="left:1292.00px;top:434.95px;font-size:10px;font-weight:400;color:#6a6a6a;font-family:'Liberation Sans';transform:scaleX(0.6646);transform-origin:0 0;">100%</div>
<div class="a" style="left:1332px;top:432px;width:19px;height:19px;background:linear-gradient(#5e5e5e,#4a4a4a);border:1px solid #333"></div>
<svg style="left:1338px;top:440px;" width="8" height="5" viewBox="0 0 8 5"><path d="M0 0 L8 0 L4 4.5 Z" fill="#f0f0f0"/></svg>
<div class="a" style="left:1086px;top:456px;width:258px;height:197px;background:#5c5c5c"></div>
<div class="a" style="left:1086px;top:456px;width:275px;height:1px;background:#333"></div>
<div class="a" style="left:1086px;top:457px;width:258px;height:46px;background:#222"></div>
<div class="a" style="left:1086px;top:457px;width:22px;height:46px;background:#555"></div>
<div class="a" style="left:1108px;top:457px;width:1px;height:46px;background:#333"></div>
<div class="a" style="left:1111px;top:460px;width:59px;height:40px;background:#fff;padding:2px;border:1px solid #111"></div>
<div class="a" style="left:1113px;top:462px;width:55px;height:36px;background-color:#fff;background-image:linear-gradient(45deg,#ccc 25%,transparent 25%,transparent 75%,#ccc 75%),linear-gradient(45deg,#ccc 25%,transparent 25%,transparent 75%,#ccc 75%);background-size:8px 8px;background-position:0 0,4px 4px"></div>
<div class="t" style="left:1176.50px;top:473.69px;font-size:12.5px;font-weight:400;color:#e8e8e8;font-family:'Liberation Sans';transform:scaleX(0.8609);transform-origin:0 0;">Shape 1</div>
<div class="a" style="left:1086px;top:502px;width:258px;height:1px;background:#1e1e1e"></div>
<div class="a" style="left:1086px;top:503px;width:258px;height:45px;background:#5a5a5a"></div>
<div class="a" style="left:1086px;top:503px;width:22px;height:45px;background:#555"></div>
<div class="a" style="left:1108px;top:503px;width:1px;height:45px;background:#333"></div>
<div class="a" style="left:1113px;top:506px;width:56px;height:38px;background:#b19c69;border:1px solid #222"></div>
<div class="t" style="left:1176.50px;top:518.39px;font-size:12.5px;font-weight:400;color:#d8d8d8;font-family:'Liberation Sans';transform:scaleX(0.9578);transform-origin:0 0;">Background</div>
<svg style="left:1313px;top:516px;" width="16" height="15" viewBox="0 0 16 15"><path d="M4 7 L4 4 Q4 1 8 1 Q12 1 12 4 L12 7" fill="none" stroke="#aaa" stroke-width="1.8"/><rect x="1.5" y="7" width="13" height="8" fill="#b0b0b0"/></svg>
<div class="a" style="left:1086px;top:547px;width:258px;height:1px;background:#222"></div>
<div class="a" style="left:1090px;top:472px;width:15px;height:15px;background:#444;border:1px solid #333"></div>
<svg style="left:1090px;top:472px;" width="15" height="15" viewBox="0 0 15 15"><path d="M1.5 7.5 Q7.5 1.5 13.5 7.5 Q7.5 13.5 1.5 7.5 Z" fill="#f4f4f4"/><circle cx="7.5" cy="7.5" r="2.6" fill="#111"/></svg>
<div class="a" style="left:1090px;top:517px;width:15px;height:15px;background:#444;border:1px solid #333"></div>
<svg style="left:1090px;top:517px;" width="15" height="15" viewBox="0 0 15 15"><path d="M1.5 7.5 Q7.5 1.5 13.5 7.5 Q7.5 13.5 1.5 7.5 Z" fill="#f4f4f4"/><circle cx="7.5" cy="7.5" r="2.6" fill="#111"/></svg>
<div class="a" style="left:1344px;top:456px;width:15px;height:197px;background:#4a4a4a"></div>
<div class="a" style="left:1344px;top:457px;width:15px;height:16px;background:#5e5e5e;border:1px solid #444"></div>
<div class="a" style="left:1344px;top:637px;width:15px;height:15px;background:#5e5e5e;border:1px solid #444"></div>
<div class="a" style="left:1086px;top:652px;width:275px;height:28px;background:#4e4e4e"></div>
<div class="a" style="left:1086px;top:652px;width:258px;height:1px;background:#2a2a2a"></div>
<svg style="left:1098px;top:659px;" width="15" height="15" viewBox="0 0 15 15"><rect x="1" y="1" width="13" height="13" fill="#666" stroke="#555"/><rect x="4" y="3" width="3" height="9" fill="#777"/><rect x="9" y="3" width="3" height="9" fill="#777"/></svg>
<svg style="left:1124px;top:659px;" width="16" height="15" viewBox="0 0 16 15"><rect x="1" y="3" width="14" height="10" rx="1" fill="#777" stroke="#5a5a5a"/><circle cx="8" cy="8" r="3" fill="#5a5a5a" stroke="#999"/></svg>
<svg style="left:1153px;top:659px;" width="17" height="17" viewBox="0 0 17 17"><circle cx="7" cy="7" r="6" fill="#777"/><path d="M2 12 L12 2" stroke="#999" stroke-width="2"/><path d="M13 12 L16 14" stroke="#888"/></svg>
<svg style="left:1180px;top:657px;" width="11" height="19" viewBox="0 0 11 19"><rect x="3" y="1" width="5" height="6" rx="2" fill="none" stroke="#777" stroke-width="1.5"/><rect x="3" y="11" width="5" height="6" rx="2" fill="none" stroke="#777" stroke-width="1.5"/><rect x="5" y="6" width="1" height="6" fill="#777"/></svg>
<div class="t" style="left:1210.30px;top:660.14px;font-size:12px;font-weight:400;color:#c4c4c4;font-family:'Liberation Sans';transform:scaleX(0.9830);transform-origin:0 0;text-shadow:1px 1px 0 #222">Lock:</div>
<svg style="left:1243px;top:659px;" width="14" height="15" viewBox="0 0 14 15"><rect x="0" y="0" width="14" height="15" fill="#8a8a8a"/><rect x="0" y="0" width="7" height="7" fill="#a0a0a0"/><rect x="7" y="8" width="7" height="7" fill="#a0a0a0"/></svg>
<svg style="left:1264px;top:657px;" width="14" height="18" viewBox="0 0 14 18"><path d="M3 7 L3 4 Q3 1 7 1 Q11 1 11 4 L11 7" fill="none" stroke="#666" stroke-width="1.6"/><rect x="1" y="7" width="12" height="10" fill="#666"/></svg>
<svg style="left:1324px;top:657px;" width="14" height="18" viewBox="0 0 14 18"><rect x="0" y="2" width="14" height="2" fill="#777"/><rect x="4" y="0" width="6" height="2" fill="#777"/><rect x="1.5" y="5" width="11" height="12" fill="#777"/><path d="M4.5 6 L4.5 16 M7 6 L7 16 M9.5 6 L9.5 16" stroke="#5a5a5a"/></svg>
<div class="a" style="left:1086px;top:680px;width:275px;height:18px;background:#262626"></div>
<div class="a" style="left:1087px;top:680px;width:68px;height:18px;background:#4a4a4a"></div>
<div class="t" style="left:1093.20px;top:683.95px;font-size:10px;font-weight:700;color:#f0f0f0;font-family:'Liberation Sans';transform:scaleX(0.9735);transform-origin:0 0;">NAVIGATOR</div>
<svg style="left:1343px;top:685px;" width="15" height="10" viewBox="0 0 15 10"><path d="M0 2 L4 2 L2 5 Z" fill="#eee"/><rect x="6" y="0" width="9" height="1.6" fill="#eee"/><rect x="6" y="3.5" width="9" height="1.6" fill="#eee"/><rect x="6" y="7" width="9" height="1.6" fill="#eee"/></svg>
<div class="a" style="left:1086px;top:698px;width:275px;height:3px;background:#4a4a4a"></div>
<div class="a" style="left:4px;top:701px;width:1357px;height:1px;background:#111"></div>
<div class="a" style="left:4px;top:702px;width:1357px;height:21px;background:#2a2a2a"></div>
<svg style="left:1017px;top:706px;" width="12" height="15" viewBox="0 0 12 15"><circle cx="6" cy="5.5" r="5" fill="#f4f0c0"/><rect x="3.5" y="10" width="5" height="4" fill="#d8d4a8"/></svg>
<div class="t" style="left:1043.40px;top:704.94px;font-size:12px;font-weight:400;color:#e0e0e0;font-family:'Liberation Sans';transform:scaleX(0.8758);transform-origin:0 0;">Add cool frames to your photos. Click to learn how.</div>
<svg style="left:219px;top:173px" width="720" height="480" viewBox="0 0 720 480"><g fill="#3a2e18" stroke="#b19c69" stroke-width="1.0" opacity=".65" transform="translate(1.4,1.8)"><g transform="translate(29.05,132.70) scale(0.7844,1)"><text x="0" y="0" font-size="97.28" font-family="Liberation Serif">A</text></g><g transform="translate(87.28,132.70) scale(1.0130,1)"><text x="0" y="0" font-size="58.80" font-family="Liberation Serif">M</text></g><g transform="translate(140.43,132.70) scale(0.9890,1)"><text x="0" y="0" font-size="58.80" font-family="Liberation Serif">A</text></g><g transform="translate(182.23,132.70) scale(1.0477,1)"><text x="0" y="0" font-size="58.80" font-family="Liberation Serif">N</text></g><g transform="translate(235.60,132.70) scale(1.0023,1)"><text x="0" y="0" font-size="58.80" font-family="Liberation Serif">D</text></g><g transform="translate(278.51,132.70) scale(0.8491,1)"><text x="0" y="0" font-size="58.80" font-family="Liberation Serif">A</text></g><g transform="translate(321.52,132.70) scale(0.9836,1)"><text x="0" y="0" font-size="94.69" font-family="Liberation Serif">R</text></g><g transform="translate(384.89,132.70) scale(0.9267,1)"><text x="0" y="0" font-size="57.12" font-family="Liberation Serif">U</text></g><g transform="translate(427.43,132.70) scale(1.0332,1)"><text x="0" y="0" font-size="57.12" font-family="Liberation Serif">T</text></g><g transform="translate(467.33,132.70) scale(1.0177,1)"><text x="0" y="0" font-size="57.12" font-family="Liberation Serif">H</text></g><g transform="translate(164.58,187.60) scale(0.8884,1)"><text x="0" y="0" font-size="55.44" font-family="Liberation Serif">P</text></g><g transform="translate(192.64,187.60) scale(1.1626,1)"><text x="0" y="0" font-size="55.44" font-family="Liberation Serif">H</text></g><g transform="translate(243.12,187.60) scale(1.2681,1)"><text x="0" y="0" font-size="55.44" font-family="Liberation Serif">O</text></g><g transform="translate(294.29,187.60) scale(1.2053,1)"><text x="0" y="0" font-size="55.44" font-family="Liberation Serif">T</text></g><g transform="translate(334.58,187.60) scale(1.0624,1)"><text x="0" y="0" font-size="55.44" font-family="Liberation Serif">O</text></g><g transform="translate(380.05,187.60) scale(1.0353,1)"><text x="0" y="0" font-size="55.44" font-family="Liberation Serif">G</text></g><g transform="translate(427.82,187.60) scale(1.1162,1)"><text x="0" y="0" font-size="55.44" font-family="Liberation Serif">R</text></g><g transform="translate(470.87,187.60) scale(0.7854,1)"><text x="0" y="0" font-size="55.44" font-family="Liberation Serif">A</text></g><g transform="translate(508.12,187.60) scale(1.0550,1)"><text x="0" y="0" font-size="55.44" font-family="Liberation Serif">P</text></g><g transform="translate(545.43,187.60) scale(0.9861,1)"><text x="0" y="0" font-size="55.44" font-family="Liberation Serif">H</text></g><g transform="translate(587.07,187.60) scale(1.0078,1)"><text x="0" y="0" font-size="55.44" font-family="Liberation Serif">Y</text></g></g><g fill="#f6f5f0" stroke="#b19c69" stroke-width="1.0"><g transform="translate(29.05,132.70) scale(0.7844,1)"><text x="0" y="0" font-size="97.28" font-family="Liberation Serif">A</text></g><g transform="translate(87.28,132.70) scale(1.0130,1)"><text x="0" y="0" font-size="58.80" font-family="Liberation Serif">M</text></g><g transform="translate(140.43,132.70) scale(0.9890,1)"><text x="0" y="0" font-size="58.80" font-family="Liberation Serif">A</text></g><g transform="translate(182.23,132.70) scale(1.0477,1)"><text x="0" y="0" font-size="58.80" font-family="Liberation Serif">N</text></g><g transform="translate(235.60,132.70) scale(1.0023,1)"><text x="0" y="0" font-size="58.80" font-family="Liberation Serif">D</text></g><g transform="translate(278.51,132.70) scale(0.8491,1)"><text x="0" y="0" font-size="58.80" font-family="Liberation Serif">A</text></g><g transform="translate(321.52,132.70) scale(0.9836,1)"><text x="0" y="0" font-size="94.69" font-family="Liberation Serif">R</text></g><g transform="translate(384.89,132.70) scale(0.9267,1)"><text x="0" y="0" font-size="57.12" font-family="Liberation Serif">U</text></g><g transform="translate(427.43,132.70) scale(1.0332,1)"><text x="0" y="0" font-size="57.12" font-family="Liberation Serif">T</text></g><g transform="translate(467.33,132.70) scale(1.0177,1)"><text x="0" y="0" font-size="57.12" font-family="Liberation Serif">H</text></g><g transform="translate(164.58,187.60) scale(0.8884,1)"><text x="0" y="0" font-size="55.44" font-family="Liberation Serif">P</text></g><g transform="translate(192.64,187.60) scale(1.1626,1)"><text x="0" y="0" font-size="55.44" font-family="Liberation Serif">H</text></g><g transform="translate(243.12,187.60) scale(1.2681,1)"><text x="0" y="0" font-size="55.44" font-family="Liberation Serif">O</text></g><g transform="translate(294.29,187.60) scale(1.2053,1)"><text x="0" y="0" font-size="55.44" font-family="Liberation Serif">T</text></g><g transform="translate(334.58,187.60) scale(1.0624,1)"><text x="0" y="0" font-size="55.44" font-family="Liberation Serif">O</text></g><g transform="translate(380.05,187.60) scale(1.0353,1)"><text x="0" y="0" font-size="55.44" font-family="Liberation Serif">G</text></g><g transform="translate(427.82,187.60) scale(1.1162,1)"><text x="0" y="0" font-size="55.44" font-family="Liberation Serif">R</text></g><g transform="translate(470.87,187.60) scale(0.7854,1)"><text x="0" y="0" font-size="55.44" font-family="Liberation Serif">A</text></g><g transform="translate(508.12,187.60) scale(1.0550,1)"><text x="0" y="0" font-size="55.44" font-family="Liberation Serif">P</text></g><g transform="translate(545.43,187.60) scale(0.9861,1)"><text x="0" y="0" font-size="55.44" font-family="Liberation Serif">H</text></g><g transform="translate(587.07,187.60) scale(1.0078,1)"><text x="0" y="0" font-size="55.44" font-family="Liberation Serif">Y</text></g></g><g fill="none" stroke="#f2e6c4" stroke-width="1.6" transform="translate(-219,-173)"><path d="M300 343 Q290 325 268 327 Q252 330 252 343 Q253 358 270 359 Q284 358 285 346 Q284 336 272 337 Q263 339 265 347 Q268 352 274 349"/><path d="M290 333 Q310 322 335 340 Q358 358 372 348 Q378 338 366 330 Q350 322 330 338 Q312 356 296 352 Q284 347 296 336"/><path d="M305 328 Q330 320 350 335 Q365 348 345 356 Q325 360 310 345"/><path d="M300 350 Q335 362 372 342" stroke-width="1.2"/></g><g transform="translate(-219,-173)"><path d="M786 268 C 778 255, 777 234, 791 226 C 800 229, 806 240, 803 251 L 799 259 C 808 258, 818 266, 818 280 C 815 288, 806 287, 796 281 L 791 277 C 795 288, 795 299, 791 304 C 781 305, 770 296, 770 283 L 774 276 C 760 279, 746 273, 742 266 C 744 258, 760 255, 780 262 Z" fill="#3a3020" opacity=".7" transform="translate(1.5,2.5)"/><path d="M786 268 C 778 255, 777 234, 791 226 C 800 229, 806 240, 803 251 L 799 259 C 808 258, 818 266, 818 280 C 815 288, 806 287, 796 281 L 791 277 C 795 288, 795 299, 791 304 C 781 305, 770 296, 770 283 L 774 276 C 760 279, 746 273, 742 266 C 744 258, 760 255, 780 262 Z" fill="#f6f6f4"/></g></svg>
<div class="a" style="left:247px;top:226px;width:300px;height:1px;border-top:1px dotted #4a3a6a;opacity:.8"></div>
<div class="a" style="left:547px;top:226px;width:300px;height:1px;border-top:1px dotted #4a3a6a;opacity:.8"></div>
<div class="a" style="left:247px;top:362px;width:600px;height:1px;border-top:1px dotted #4a3a6a;opacity:.8"></div>
<div class="a" style="left:247px;top:226px;width:1px;height:136px;border-left:1px dotted #4a3a6a;opacity:.8"></div>
<div class="a" style="left:244px;top:223px;width:7px;height:7px;border:1px solid #5a2a9a;background:transparent"></div>
<div class="a" style="left:543px;top:223px;width:7px;height:7px;border:1px solid #5a2a9a;background:transparent"></div>
<div class="a" style="left:244px;top:291px;width:7px;height:7px;border:1px solid #5a2a9a;background:transparent"></div>
<div class="a" style="left:244px;top:359px;width:7px;height:7px;border:1px solid #5a2a9a;background:transparent"></div>
<div class="a" style="left:543px;top:359px;width:7px;height:7px;border:1px solid #5a2a9a;background:transparent"></div>
<svg style="left:540px;top:288px;" width="12" height="12" viewBox="0 0 12 12"><circle cx="6" cy="6" r="3" fill="none" stroke="#5a2a9a" stroke-width="1"/><path d="M6 0 L6 12 M0 6 L12 6" stroke="#5a2a9a" stroke-width="1"/></svg>
<svg style="left:542px;top:375px;" width="8" height="8" viewBox="0 0 8 8"><circle cx="4.4" cy="4" r="3" fill="none" stroke="#5a2a9a" stroke-width="1"/></svg>
<div class="a" style="left:818px;top:77px;width:366px;height:376px;background:#2e2e2e"></div>
<div class="a" style="left:819px;top:78px;width:364px;height:374px;background:#5b5b5b"></div>
<div class="a" style="left:819px;top:78px;width:364px;height:19px;background:linear-gradient(#8e8e8e,#6e6e6e)"></div>
<div class="a" style="left:819px;top:96px;width:364px;height:1px;background:#333"></div>
<div class="a" style="left:1177px;top:97px;width:6px;height:355px;background:#545454"></div>
<div class="t" style="left:832.00px;top:80.59px;font-size:11.5px;font-weight:400;color:#1a1a1a;font-family:'Liberation Sans';transform:scaleX(0.9953);transform-origin:0 0;text-shadow:0.4px 0 0 #1a1a1a">Style Settings</div>
<svg style="left:1169px;top:83px;" width="8" height="8" viewBox="0 0 8 8"><path d="M1 1 L7 7 M7 1 L1 7" stroke="#e8e8e8" stroke-width="2"/></svg>
<div class="a" style="left:835px;top:112px;width:13px;height:13px;background:#5c5c5c;border:1px solid #1e1e1e"></div>
<svg style="left:835px;top:112px;" width="13" height="13" viewBox="0 0 13 13"><path d="M2.3 4.6 L6.2 8.2 L12.5 0.6" fill="none" stroke="#f0f0f0" stroke-width="2.6"/></svg>
<div class="t" style="left:851.20px;top:112.64px;font-size:12px;font-weight:400;color:#e6e6e6;font-family:'Liberation Sans';transform:scaleX(0.9511);transform-origin:0 0;">Preview</div>
<div class="a" style="left:836px;top:145px;width:331px;height:218px;background:#575757;border:1px solid #8a8a8a"></div>
<div class="a" style="left:837px;top:146px;width:329px;height:59px;background:#707070;border-top:1px solid #7c7c7c;border-bottom:2px solid #7a7a7a"></div>
<div class="t" style="left:852.00px;top:171.09px;font-size:12.5px;font-weight:400;color:#eaeaea;font-family:'Liberation Sans';transform:scaleX(0.9876);transform-origin:0 0;">Lighting Angle:</div>
<svg style="left:937px;top:160px;" width="38" height="38" viewBox="0 0 38 38"><circle cx="18.7" cy="18.6" r="17.6" fill="#a9a9a9" stroke="#1a1a1a" stroke-width="1.4"/><path d="M18.7 18.6 L9.5 2.8" stroke="#111" stroke-width="1.3"/><circle cx="18.7" cy="18.6" r="1.5" fill="#111"/></svg>
<div class="a" style="left:979px;top:169px;width:34px;height:19px;background:#383838;border:1px solid #2a2a2a"></div>
<div class="t" style="left:983.00px;top:171.99px;font-size:11.5px;font-weight:400;color:#f0f0f0;font-family:'Liberation Sans';transform:scaleX(0.8860);transform-origin:0 0;">120</div>
<div class="t" style="left:1017.00px;top:172.04px;font-size:11px;font-weight:400;color:#e0e0e0;font-family:'Liberation Sans';">°</div>
<div class="a" style="left:837px;top:206px;width:329px;height:21px;background:#575757"></div>
<svg style="left:845px;top:211.3px;" width="6" height="9" viewBox="0 0 6 9"><path d="M0 0 L6 4.5 L0 9 Z" fill="#9ab0e8"/></svg>
<div class="a" style="left:858px;top:209.3px;width:13px;height:13px;background:#4c4c4c;border:1px solid #1e1e1e"></div>
<div class="t" style="left:874.00px;top:209.44px;font-size:12px;font-weight:400;color:#e0e0e0;font-family:'Liberation Sans';transform:scaleX(0.9722);transform-origin:0 0;">Drop Shadow</div>
<div class="a" style="left:837px;top:226px;width:329px;height:1px;background:#4e4e4e"></div>
<div class="a" style="left:837px;top:227px;width:329px;height:1px;background:#6e6e6e"></div>
<div class="a" style="left:837px;top:228px;width:329px;height:21px;background:#575757"></div>
<svg style="left:845px;top:234.3px;" width="6" height="9" viewBox="0 0 6 9"><path d="M0 0 L6 4.5 L0 9 Z" fill="#9ab0e8"/></svg>
<div class="a" style="left:858px;top:232.3px;width:13px;height:13px;background:#4c4c4c;border:1px solid #1e1e1e"></div>
<div class="t" style="left:874.00px;top:232.44px;font-size:12px;font-weight:400;color:#e0e0e0;font-family:'Liberation Sans';transform:scaleX(0.9728);transform-origin:0 0;">Glow</div>
<div class="a" style="left:837px;top:248px;width:329px;height:1px;background:#4e4e4e"></div>
<div class="a" style="left:837px;top:249px;width:329px;height:1px;background:#6e6e6e"></div>
<div class="a" style="left:837px;top:250px;width:329px;height:22px;background:#575757"></div>
<div class="a" style="left:858px;top:256px;width:13px;height:13px;background:#5c5c5c;border:1px solid #1e1e1e"></div>
<svg style="left:858px;top:256px;" width="13" height="13" viewBox="0 0 13 13"><path d="M2.3 4.6 L6.2 8.2 L12.5 0.6" fill="none" stroke="#f0f0f0" stroke-width="2.6"/></svg>
<div class="t" style="left:874.00px;top:255.24px;font-size:12px;font-weight:400;color:#e6e6e6;font-family:'Liberation Sans';transform:scaleX(0.9390);transform-origin:0 0;">Bevel</div>
<div class="a" style="left:837px;top:272px;width:329px;height:67px;background:#717171;border-top:1px solid #7a7a7a;border-bottom:1px solid #5e5e5e"></div>
<div class="t" style="left:873.40px;top:283.44px;font-size:12px;font-weight:400;color:#ececec;font-family:'Liberation Sans';transform:scaleX(0.8731);transform-origin:0 0;">Size:</div>
<div class="a" style="left:901px;top:293px;width:169px;height:2px;background:#555;border-bottom:1px solid #888"></div>
<div class="a" style="left:942px;top:291px;width:1px;height:4px;background:#888"></div>
<div class="a" style="left:985px;top:291px;width:1px;height:4px;background:#888"></div>
<div class="a" style="left:1027px;top:291px;width:1px;height:4px;background:#888"></div>
<svg style="left:904px;top:285px;" width="15" height="15" viewBox="0 0 15 15"><circle cx="7.5" cy="7.5" r="5.8" fill="#6a6a6a" stroke="#2a2a2a" stroke-width="1.3"/></svg>
<div class="a" style="left:1076px;top:281px;width:32px;height:20px;background:#333;border:1px solid #2a2a2a"></div>
<div class="t" style="left:1078.00px;top:283.09px;font-size:11.5px;font-weight:400;color:#f0f0f0;font-family:'Liberation Sans';">5</div>
<div class="t" style="left:1113.40px;top:283.44px;font-size:12px;font-weight:400;color:#e8e8e8;font-family:'Liberation Sans';transform:scaleX(1.0167);transform-origin:0 0;">px</div>
<div class="t" style="left:846.00px;top:308.94px;font-size:12px;font-weight:400;color:#ececec;font-family:'Liberation Sans';transform:scaleX(1.0121);transform-origin:0 0;">Direction:</div>
<div class="a" style="left:905px;top:309px;width:12px;height:12px;background:#5c5c5c;border:1px solid #1e1e1e"></div>
<svg style="left:905px;top:309px;" width="12" height="12" viewBox="0 0 12 12"><path d="M2.3 4.6 L6.2 8.2 L11.5 0.6" fill="none" stroke="#f0f0f0" stroke-width="2.6"/></svg>
<div class="t" style="left:921.40px;top:308.94px;font-size:12px;font-weight:400;color:#dedede;font-family:'Liberation Sans';transform:scaleX(0.9320);transform-origin:0 0;">Up</div>
<div class="a" style="left:948px;top:309px;width:12px;height:12px;background:#4c4c4c;border:1px solid #1e1e1e"></div>
<div class="t" style="left:964.50px;top:308.94px;font-size:12px;font-weight:400;color:#dedede;font-family:'Liberation Sans';transform:scaleX(0.9809);transform-origin:0 0;">Down</div>
<div class="a" style="left:837px;top:339px;width:329px;height:23px;background:#575757"></div>
<svg style="left:845px;top:345.6px;" width="6" height="9" viewBox="0 0 6 9"><path d="M0 0 L6 4.5 L0 9 Z" fill="#9ab0e8"/></svg>
<div class="a" style="left:858px;top:343.6px;width:13px;height:13px;background:#4c4c4c;border:1px solid #1e1e1e"></div>
<div class="t" style="left:874.00px;top:343.74px;font-size:12px;font-weight:400;color:#e0e0e0;font-family:'Liberation Sans';transform:scaleX(0.9485);transform-origin:0 0;">Stroke</div>
<svg style="left:843px;top:249px;" width="78" height="31" viewBox="0 0 78 31"><rect x="3.5" y="4" width="71" height="23" rx="10.5" ry="10.5" fill="none" stroke="#f80a0a" stroke-width="4.4"/></svg>
<svg style="left:840px;top:383px;" width="13" height="15" viewBox="0 0 13 15"><circle cx="6" cy="5.5" r="5" fill="#f4f0b8"/><rect x="3.5" y="10" width="5" height="4" fill="#d4d0a0"/></svg>
<div class="t" style="left:861.00px;top:390.34px;font-size:12px;font-weight:400;color:#ececec;font-family:'Liberation Sans';transform:scaleX(0.9994);transform-origin:0 0;">Learn more about:</div>
<div class="t" style="left:960.90px;top:390.34px;font-size:12px;font-weight:400;color:#4a90e2;font-family:'Liberation Sans';transform:scaleX(0.9389);transform-origin:0 0;">Layer Styles</div>
<div class="a" style="left:943px;top:419px;width:68px;height:17px;background:linear-gradient(#7a7a7a,#5e5e5e);border:1px solid #2a2a2a;box-shadow:inset 0 1px 0 #8a8a8a"></div>
<div class="t" style="left:962.85px;top:420.14px;font-size:12px;font-weight:400;color:#f0f0f0;font-family:'Liberation Sans';transform:scaleX(0.9024);transform-origin:0 0;">Reset</div>
<div class="a" style="left:1021px;top:419px;width:68px;height:17px;background:linear-gradient(#7a7a7a,#5e5e5e);border:1px solid #2a2a2a;box-shadow:inset 0 1px 0 #8a8a8a"></div>
<div class="t" style="left:1037.50px;top:420.14px;font-size:12px;font-weight:400;color:#f0f0f0;font-family:'Liberation Sans';transform:scaleX(0.9368);transform-origin:0 0;">Cancel</div>
<div class="a" style="left:1099px;top:419px;width:68px;height:17px;background:linear-gradient(#7a7a7a,#5e5e5e);border:1px solid #2a2a2a;box-shadow:inset 0 1px 0 #8a8a8a"></div>
<div class="t" style="left:1124.75px;top:420.14px;font-size:12px;font-weight:400;color:#f0f0f0;font-family:'Liberation Sans';transform:scaleX(0.9514);transform-origin:0 0;">OK</div>
</div></body></html>
